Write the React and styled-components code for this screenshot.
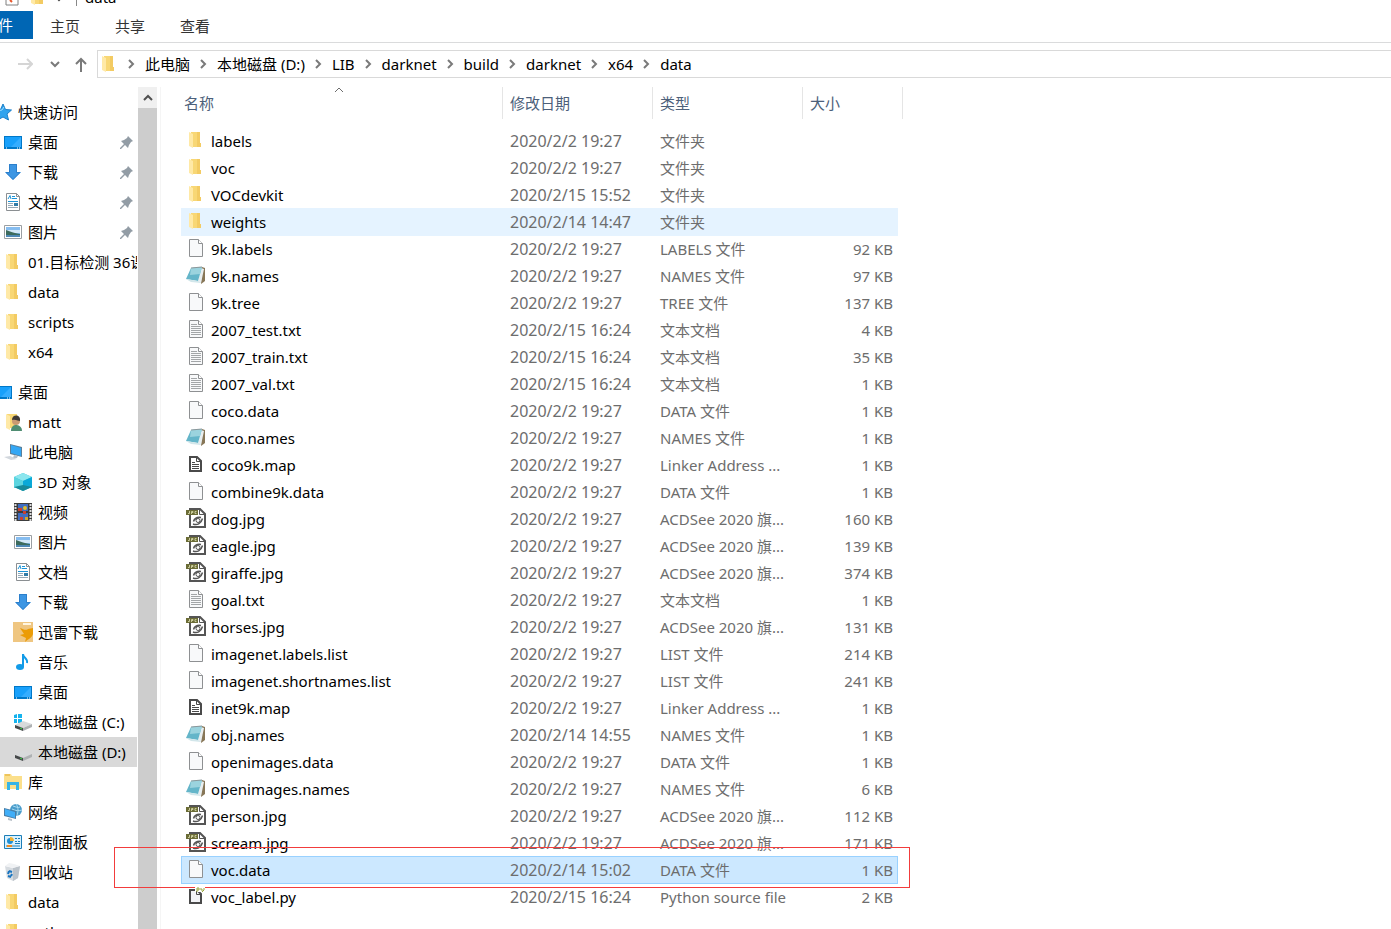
import React from 'react';
import styled, { createGlobalStyle } from 'styled-components';

const GlobalStyle = createGlobalStyle`
  * {
    box-sizing: border-box;
  }
  body {
    margin: 0;
    background: #fff;
    color: #000;
    font-family: 'Noto Sans', 'Noto Sans CJK SC', sans-serif;
    font-size: 15px;
  }
  button {
    margin: 0;
    padding: 0;
    border: none;
    background: none;
    color: inherit;
    font: inherit;
  }
`;

const Window = styled.div`
  display: flex;
  flex-direction: column;
  height: 100vh;
  overflow: hidden;
`;

const TitleBar = styled.header`
  display: flex;
  align-items: flex-end;
  height: 11px;
  padding: 0 0 5px 5px;
  overflow: hidden;
`;

const TitleIcons = styled.div`
  display: flex;
  align-items: flex-end;
  gap: 10px;
  width: 71px;
`;

const Title = styled.span`
  height: 16px;
  padding-left: 8px;
  border-left: 1px solid #888;
  line-height: 14px;
`;

const Ribbon = styled.nav`
  display: flex;
  height: 32px;
  border-bottom: 1px solid #dadbdc;
`;

const FileTab = styled.button`
  display: flex;
  justify-content: flex-end;
  width: 33px;
  height: 28px;
  padding-right: 20px;
  overflow: hidden;
  background: #0066b4;
  color: #fff;
  line-height: 28px;
  white-space: nowrap;
`;

const Tab = styled.button`
  width: 64px;
  height: 30px;
  margin-right: 1px;
  color: #333;
  line-height: 30px;
`;

const AddressRow = styled.div`
  display: flex;
  align-items: center;
  height: 42px;
  padding-left: 17px;
`;

const NavButton = styled.button`
  display: flex;
  justify-content: center;
  width: ${(props) => props.$width}px;
  margin-right: ${(props) => props.$gap}px;
`;

const AddressBox = styled.div`
  display: flex;
  flex: 1;
  align-items: center;
  height: 28px;
  padding-left: 2px;
  border: 1px solid #d9d9d9;
  border-right: none;
`;

const Crumb = styled.button`
  display: flex;
  align-items: center;
  line-height: 26px;
  white-space: nowrap;

  svg {
    margin: 0 10px 0 9px;
  }
`;

const Main = styled.main`
  display: flex;
  flex: 1;
  min-height: 0;
  padding-top: 2px;
`;

const Sidebar = styled.nav`
  width: 137px;
  overflow: hidden;
`;

const Tree = styled.ul`
  margin: 10px 0 0 -6px;
  padding: 0;
  list-style: none;
`;

const TreeItem = styled.li`
  margin-top: ${(props) => (props.$spaced ? '10px' : '0')};
`;

const TreeLink = styled.a`
  display: flex;
  align-items: center;
  gap: 6px;
  height: 30px;
  padding-left: ${(props) => props.$level * 10}px;
  padding-right: 4px;
  background: ${(props) => (props.$active ? '#d9d9d9' : 'transparent')};
  color: #000;
  line-height: 30px;
  text-decoration: none;
  white-space: nowrap;

  > svg {
    flex: none;
    margin-left: auto;
  }
`;

const IconSlot = styled.span`
  display: flex;
  flex: none;
  align-items: center;
  justify-content: center;
  width: ${(props) => props.$width}px;

  svg {
    flex: none;
  }
`;

const ScrollBar = styled.div`
  display: flex;
  flex-direction: column;
  width: 20px;
  margin-left: 1px;
  background: #f0f0f0;
  border-right: 1px solid #fff;
`;

const ScrollUp = styled.button`
  display: flex;
  align-items: center;
  justify-content: center;
  height: 21px;
`;

const Thumb = styled.div`
  flex: 1;
  background: #cdcdcd;
`;

const Content = styled.section`
  flex: 1;
  margin-left: 2px;
  padding-left: 20px;
  border-left: 1px solid #f5f5f5;
`;

const FileTable = styled.table`
  display: block;

  thead,
  tbody {
    display: block;
  }
  tbody {
    padding-top: 8px;
  }
`;

const HeadRow = styled.tr`
  display: grid;
  grid-template-columns: 322px 150px 150px 100px;
`;

const HeadCell = styled.th`
  position: relative;
  height: 32px;
  padding: 0 0 0 ${(props) => (props.$first ? 3 : 7)}px;
  border-right: 1px solid #e5e5e5;
  color: #4c607a;
  font-weight: normal;
  line-height: 32px;
  text-align: left;

  svg {
    position: absolute;
    top: 0;
    left: 0;
    right: 6px;
    margin: 0 auto;
  }
`;

const Row = styled.tr`
  position: relative;
  display: grid;
  grid-template-columns: 321px 150px 150px 94px;
  width: 717px;
  height: 28px;
  margin-bottom: -1px;
  border: 1px solid ${(props) => (props.$selected ? '#99d1ff' : 'transparent')};
  background: ${(props) => {
    if (props.$selected) return '#cce8ff';
    return props.$hovered ? '#e5f3ff' : 'transparent';
  }};
`;

const Cell = styled.td`
  padding: 0 ${(props) => (props.$right ? 4 : 0)}px 0 7px;
  color: #6d6d6d;
  line-height: 26px;
  text-align: ${(props) => (props.$right ? 'right' : 'left')};
  white-space: nowrap;
`;

const DateCell = styled(Cell)`
  font-size: 16px;
`;

const NameCell = styled.td`
  display: flex;
  gap: 5px;
  padding: 0 0 0 4px;
  line-height: 26px;
  white-space: nowrap;

  ${IconSlot} {
    padding-bottom: 2px;
  }
`;

const Marker = styled.td`
  position: absolute;
  top: -10px;
  left: -68px;
  width: 796px;
  height: 41px;
  padding: 0;
  border: 1px solid #f23c3c;
  pointer-events: none;
`;

/* ---------- icons ---------- */

const Svg = ({ size = 18, children }) => (
  <svg width={size} height={size} viewBox={`0 0 ${size} ${size}`} fill="none" aria-hidden="true">
    {children}
  </svg>
);

const FolderIcon = () => (
  <Svg>
    <path d="M4 1h9v11h1v4H4z" fill="#f8d775" />
    <path d="M10 1h3v11h1v4h-4z" fill="#f3cb63" />
    <path d="M2 1l4 2v14l-4-2z" fill="#ffe9a6" />
  </Svg>
);

const StarIcon = () => (
  <Svg>
    <path d="M9 1l2.500 5.500 6 .5-4.500 4 1.500 6L9 14l-5.500 3L5 11 .5 7l6-.5z" fill="#2fa3ee" stroke="#1b7fc9" />
    <path d="M3 8l5-1 2-3" stroke="#9fdcff" />
  </Svg>
);

const DesktopIcon = () => (
  <Svg>
    <path d="M0 3h18v13H0z" fill="#0078c8" />
    <path d="M1 4h16v10H1z" fill="#18a0fb" />
    <path d="M17 4v10H7z" fill="#35adff" />
    <path d="M2 15h1M13 15h1M15 15h1" stroke="#fff" />
  </Svg>
);

const DownloadIcon = () => (
  <Svg>
    <path d="M5 1h8v8h4l-8 8-8-8h4z" fill="#3d96e3" />
    <path d="M5.500 1.500h7v8h3.500l-7 7-7-7h3.500z" stroke="#2c7fcb" />
  </Svg>
);

const DocumentIcon = () => (
  <Svg>
    <path d="M2.500 .5h10l3 3v14h-13z" fill="#fff" stroke="#8b8f92" />
    <path d="M12.500 .5v3h3" stroke="#8b8f92" />
    <path d="M4 6l2-3.500L7 6M8 3.500h3M8 5.500h5" stroke="#1b93d6" />
    <path d="M4 8.500h10" stroke="#1b93d6" />
    <path d="M4 10.500h5M4 12.500h5M4 14.500h10" stroke="#93a9b8" />
    <path d="M10 10h4v3h-4z" fill="#2f7ca8" />
  </Svg>
);

const PictureIcon = () => (
  <Svg>
    <path d="M.5 2.500h17v13H.5z" fill="#fff" stroke="#9a9fa3" />
    <path d="M2 4h14v10H2z" fill="#86bdf0" />
    <path d="M2 7h14v3H2z" fill="#d3e8f8" />
    <path d="M2 7c4 1 6 3 14 4v1H2z" fill="#3d6b5d" />
    <path d="M2 12h14v2H2z" fill="#4e88b5" />
  </Svg>
);

const UserFolderIcon = () => (
  <Svg>
    <path d="M3 1h10v14H3z" fill="#f8d775" />
    <path d="M2 1l4 2v14l-4-2z" fill="#ffe9a6" />
    <path d="M7 18c0-5 3-6 5-6s6 1 6 6z" fill="#4f8d72" />
    <circle cx="12" cy="8" r="4" fill="#c99a72" />
    <path d="M8 7c0-6 9-6 8 1-2 0-4-2-8-1z" fill="#3f3a36" />
  </Svg>
);

const ComputerIcon = () => (
  <Svg>
    <path d="M6 1l12 3v10L6 11z" fill="#5b7f99" />
    <path d="M7 2l10 3v8L7 10z" fill="#33a7f5" />
    <path d="M10 12l4 1-1 2h-4z" fill="#b8c1c9" />
    <path d="M0 14l6-1 7 3-6 1z" fill="#d2d7dd" />
  </Svg>
);

const CubeIcon = () => (
  <Svg>
    <path d="M9 0l9 4v10l-9 4-9-4V4z" fill="#35c4d6" />
    <path d="M9 0l9 4-9 4-9-4z" fill="#8ce6ee" />
    <path d="M0 4l9 4v5l-9 2z" fill="#5cd5e0" />
    <path d="M18 4L9 8v5l9 2z" fill="#0aa9d8" />
    <path d="M0 14l9-2 9 2-9 4z" fill="#178a9a" />
  </Svg>
);

const VideoIcon = () => (
  <Svg>
    <path d="M0 0h18v18H0z" fill="#3c3c3c" />
    <path d="M1.500 1v17M16.500 1v17" stroke="#ddd" strokeWidth="2" strokeDasharray="2 1" />
    <path d="M4 1h10v7H4zM4 10h10v7H4z" fill="#3f6cc0" />
    <circle cx="11" cy="5" r="2" fill="#e0bf2d" />
    <path d="M4 5h4v3H4zM9 8h3v3H9zM6 14h3v3H6z" fill="#c9402f" />
    <path d="M11 14h3v3h-3z" fill="#d2a52a" />
  </Svg>
);

const ThunderIcon = () => (
  <Svg size={20}>
    <path d="M0 0h20v20H0z" fill="#efc681" />
    <path d="M10 1h8v2h-8z" fill="#fff6e2" />
    <path d="M7 6c3 1 6 3 8 1l5-1v6c-1 4-5 5-8 8l1-4-6-3 4-1z" fill="#eb9c06" />
  </Svg>
);

const MusicIcon = () => (
  <Svg>
    <path d="M9 1c0 4 5 4 4 9" stroke="#129be8" strokeWidth="2" />
    <path d="M9 1v13" stroke="#129be8" strokeWidth="2" />
    <ellipse cx="6" cy="14" rx="4" ry="3" fill="#129be8" />
  </Svg>
);

const DriveIcon = ({ system }) => (
  <Svg>
    {system && <path d="M0 2l3-1v4H0zM4 1h4v4H4zM0 6h3v4H0zM4 6h4v4H4z" fill="#15b3ee" />}
    <path d="M1 12l8-4 9 3-9 4z" fill="#d8dadb" />
    <path d="M9 15l9-4v3l-9 4z" fill="#aeb1b3" />
    <path d="M1 12l8 3v3l-8-3z" fill="#454849" />
    <path d="M6 15l2 1" stroke="#3ddc4a" />
  </Svg>
);

const LibraryIcon = () => (
  <Svg>
    <path d="M0 1h7l1 2h10v13H0z" fill="#fbdf8b" />
    <path d="M1 2h5" stroke="#e0a92d" />
    <path d="M3 17V9h12v8h-3v-5H6v5z" fill="#35b4e6" />
  </Svg>
);

const NetworkIcon = () => (
  <Svg>
    <circle cx="12" cy="7" r="6" fill="#4a9ccb" />
    <path d="M9 3c3 1 5 2 7 1M8 6c4 2 7 2 10 1M12 1c3 4 2 8 1 12" stroke="#a9dcf2" />
    <path d="M0 5l12 3v8L0 13z" fill="#4b7ea6" />
    <path d="M1 6l10 3v6L1 12z" fill="#40aef8" />
    <path d="M4 15l4 1v2l-4-1z" fill="#b8c1c9" />
  </Svg>
);

const ControlPanelIcon = () => (
  <Svg>
    <path d="M.5 2.500h17v13H.5z" fill="#d9f1fd" stroke="#1c7eb8" />
    <path d="M2 13h14" stroke="#1c7eb8" />
    <circle cx="6" cy="8" r="3" fill="#1f8fd4" />
    <path d="M6 4v4h4a4 4 0 0 0-4-4z" fill="#f3b233" />
    <path d="M11 5.500h2M14 5.500h2M11 8.500h2M14 8.500h2M11 10.500h5" stroke="#1c7eb8" />
    <path d="M3 13h5" stroke="#ef8a1c" strokeWidth="2" />
  </Svg>
);

const RecycleIcon = () => (
  <Svg>
    <path d="M1 3l8 2 7-2-2 12-5 3-6-3z" fill="#d6dbe0" />
    <path d="M9 5l7-2-2 12-5 3z" fill="#bcc3ca" />
    <path d="M1 3l4-3 5 1 6 2-7 2z" fill="#f0f2f4" />
    <path d="M5 8l-1 3M5 8l3 1M8 11l-1 2M4 13l3 1" stroke="#1874bf" strokeWidth="2" />
  </Svg>
);

const PinIcon = () => (
  <Svg size={13}>
    <path d="M8 0l5 5-2 1-2 3-1 3-3-3-4 4H0v-1l4-4-3-3 3-1 3-2z" fill="#929ca5" />
  </Svg>
);

const PaperShape = () => (
  <>
    <path d="M2.500 .5h9l4 4v13h-13z" fill="#f8f9fa" stroke="#8e9092" />
    <path d="M11.500 .5v4h4" fill="#fff" stroke="#8e9092" />
  </>
);

const FileIcon = () => (
  <Svg>
    <PaperShape />
  </Svg>
);

const TextIcon = () => (
  <Svg>
    <PaperShape />
    <path d="M4 4.500h6M4 6.500h10M4 8.500h10M4 10.500h10M4 12.500h10M4 14.500h10" stroke="#a3a6a8" />
  </Svg>
);

const NotebookIcon = () => (
  <svg width="20" height="18" viewBox="0 0 20 18" aria-hidden="true">
    <path d="M16 1l3 1v13l-4 3z" fill="#877657" />
    <path d="M15 2l3 1-3 14-3-1z" fill="#e8eef0" />
    <path d="M5 2l11-1-4 14-12-2z" fill="#64b5c9" />
    <path d="M5 2l11-1-2 7-10 1z" fill="#9bd3de" />
    <path d="M0 13l12 2 3 2-10-1z" fill="#d2e6ea" />
    <path d="M5 2l11-1" stroke="#8b979a" />
  </svg>
);

const MapIcon = () => (
  <Svg>
    <path d="M3 2h7l4 4v10H3z" fill="#fff" stroke="#4a4a4a" strokeWidth="2" />
    <path d="M9.500 2v4.500H14" stroke="#4a4a4a" />
    <path d="M5 7.500h3M5 9.500h7M5 11.500h7M5 13.500h7" stroke="#4a4a4a" />
  </Svg>
);

const JpgIcon = () => (
  <svg width="20" height="20" viewBox="0 0 20 20" fill="none" aria-hidden="true">
    <path d="M4 1h10l5 5v13H4z" fill="#fff" stroke="#555" strokeWidth="2" />
    <path d="M13.500 1v5.500H19" stroke="#555" />
    <path d="M0 2h12v5H0z" fill="#6b6c36" />
    <path d="M2 5.500h1.500V3M5.500 6V3.500h1.500v1H5.500M10.500 3.500H9v2h1.500" stroke="#c9ca9b" />
    <path d="M7 16c4 1.500 8 0 9.500-5.500" stroke="#555" strokeWidth="1.500" />
    <path d="M7.500 13.500c1-3 4-4.500 7.500-4" stroke="#555" strokeWidth="1.500" />
    <circle cx="12" cy="12.500" r="2" stroke="#555" />
  </svg>
);

const PythonIcon = () => (
  <Svg>
    <path d="M3 3h7l4 4v9H3z" fill="#f3f4f7" stroke="#4a4a4a" strokeWidth="2" />
    <path d="M8 0h10v5H8z" fill="#fff" />
    <path d="M9.500 4v3.500H14" stroke="#4a4a4a" />
    <path d="M10 5V1h2v2h-2M14 1v2h2M17 1v2l-2 2" stroke="#9aa63c" />
  </Svg>
);

const Chevron = ({ dir = 'right', color = '#7a7a7a' }) => {
  const paths = {
    right: 'M2 1l4 4-4 4',
    down: 'M1 3l4 4 4-4',
    up: 'M1 7l4-4 4 4',
  };
  const width = dir === 'right' ? 8 : 10;
  return (
    <svg width={width} height="10" viewBox={`0 0 ${width} 10`} fill="none" aria-hidden="true">
      <path d={paths[dir]} stroke={color} strokeWidth="2" />
    </svg>
  );
};

/* ---------- data ---------- */

const crumbs = ['此电脑', '本地磁盘 (D:)', 'LIB', 'darknet', 'build', 'darknet', 'x64', 'data'];

const treeItems = [
  { label: '快速访问', icon: StarIcon, level: 0 },
  { label: '桌面', icon: DesktopIcon, level: 1, pinned: true },
  { label: '下载', icon: DownloadIcon, level: 1, pinned: true },
  { label: '文档', icon: DocumentIcon, level: 1, pinned: true },
  { label: '图片', icon: PictureIcon, level: 1, pinned: true },
  { label: '01.目标检测 36课', icon: FolderIcon, level: 1 },
  { label: 'data', icon: FolderIcon, level: 1 },
  { label: 'scripts', icon: FolderIcon, level: 1 },
  { label: 'x64', icon: FolderIcon, level: 1 },
  { label: '桌面', icon: DesktopIcon, level: 0, spaced: true },
  { label: 'matt', icon: UserFolderIcon, level: 1 },
  { label: '此电脑', icon: ComputerIcon, level: 1 },
  { label: '3D 对象', icon: CubeIcon, level: 2 },
  { label: '视频', icon: VideoIcon, level: 2 },
  { label: '图片', icon: PictureIcon, level: 2 },
  { label: '文档', icon: DocumentIcon, level: 2 },
  { label: '下载', icon: DownloadIcon, level: 2 },
  { label: '迅雷下载', icon: ThunderIcon, level: 2 },
  { label: '音乐', icon: MusicIcon, level: 2 },
  { label: '桌面', icon: DesktopIcon, level: 2 },
  { label: '本地磁盘 (C:)', icon: DriveIcon, level: 2, system: true },
  { label: '本地磁盘 (D:)', icon: DriveIcon, level: 2, active: true },
  { label: '库', icon: LibraryIcon, level: 1 },
  { label: '网络', icon: NetworkIcon, level: 1 },
  { label: '控制面板', icon: ControlPanelIcon, level: 1 },
  { label: '回收站', icon: RecycleIcon, level: 1 },
  { label: 'data', icon: FolderIcon, level: 1 },
  { label: 'python', icon: FolderIcon, level: 1 },
];

const kinds = {
  folder: { icon: FolderIcon, type: '文件夹' },
  labels: { icon: FileIcon, type: 'LABELS 文件' },
  names: { icon: NotebookIcon, type: 'NAMES 文件' },
  tree: { icon: FileIcon, type: 'TREE 文件' },
  txt: { icon: TextIcon, type: '文本文档' },
  data: { icon: FileIcon, type: 'DATA 文件' },
  map: { icon: MapIcon, type: 'Linker Address ...' },
  jpg: { icon: JpgIcon, type: 'ACDSee 2020 旗...' },
  list: { icon: FileIcon, type: 'LIST 文件' },
  py: { icon: PythonIcon, type: 'Python source file' },
};

const files = [
  ['labels', 'folder', '2020/2/2 19:27', ''],
  ['voc', 'folder', '2020/2/2 19:27', ''],
  ['VOCdevkit', 'folder', '2020/2/15 15:52', ''],
  ['weights', 'folder', '2020/2/14 14:47', ''],
  ['9k.labels', 'labels', '2020/2/2 19:27', '92 KB'],
  ['9k.names', 'names', '2020/2/2 19:27', '97 KB'],
  ['9k.tree', 'tree', '2020/2/2 19:27', '137 KB'],
  ['2007_test.txt', 'txt', '2020/2/15 16:24', '4 KB'],
  ['2007_train.txt', 'txt', '2020/2/15 16:24', '35 KB'],
  ['2007_val.txt', 'txt', '2020/2/15 16:24', '1 KB'],
  ['coco.data', 'data', '2020/2/2 19:27', '1 KB'],
  ['coco.names', 'names', '2020/2/2 19:27', '1 KB'],
  ['coco9k.map', 'map', '2020/2/2 19:27', '1 KB'],
  ['combine9k.data', 'data', '2020/2/2 19:27', '1 KB'],
  ['dog.jpg', 'jpg', '2020/2/2 19:27', '160 KB'],
  ['eagle.jpg', 'jpg', '2020/2/2 19:27', '139 KB'],
  ['giraffe.jpg', 'jpg', '2020/2/2 19:27', '374 KB'],
  ['goal.txt', 'txt', '2020/2/2 19:27', '1 KB'],
  ['horses.jpg', 'jpg', '2020/2/2 19:27', '131 KB'],
  ['imagenet.labels.list', 'list', '2020/2/2 19:27', '214 KB'],
  ['imagenet.shortnames.list', 'list', '2020/2/2 19:27', '241 KB'],
  ['inet9k.map', 'map', '2020/2/2 19:27', '1 KB'],
  ['obj.names', 'names', '2020/2/14 14:55', '1 KB'],
  ['openimages.data', 'data', '2020/2/2 19:27', '1 KB'],
  ['openimages.names', 'names', '2020/2/2 19:27', '6 KB'],
  ['person.jpg', 'jpg', '2020/2/2 19:27', '112 KB'],
  ['scream.jpg', 'jpg', '2020/2/2 19:27', '171 KB'],
  ['voc.data', 'data', '2020/2/14 15:02', '1 KB'],
  ['voc_label.py', 'py', '2020/2/15 16:24', '2 KB'],
];

const App = () => (
  <Window>
    <GlobalStyle />
    <TitleBar>
      <TitleIcons>
        <svg width="14" height="16" viewBox="0 0 14 16" fill="none" aria-hidden="true">
          <path d="M1 0h12v15H1z" fill="#fff" stroke="#808080" />
          <path d="M5 10l2 2" stroke="#e8562a" strokeWidth="2" />
        </svg>
        <FolderIcon />
        <svg width="10" height="10" viewBox="0 0 10 10" fill="none" aria-hidden="true">
          <path d="M0 2l2 2 2-2" stroke="#444" strokeWidth="2" />
        </svg>
      </TitleIcons>
      <Title>data</Title>
    </TitleBar>
    <Ribbon>
      <FileTab type="button">文件</FileTab>
      <Tab type="button">主页</Tab>
      <Tab type="button">共享</Tab>
      <Tab type="button">查看</Tab>
    </Ribbon>
    <AddressRow>
      <NavButton type="button" aria-label="前进" $width={16} $gap={17}>
        <svg width="16" height="12" viewBox="0 0 16 12" fill="none" aria-hidden="true">
          <path d="M1 6h14M10 1l5 5-5 5" stroke="#d5d5d5" strokeWidth="2" />
        </svg>
      </NavButton>
      <NavButton type="button" aria-label="最近浏览的位置" $width={10} $gap={14}>
        <Chevron dir="down" />
      </NavButton>
      <NavButton type="button" aria-label="向上" $width={14} $gap={9}>
        <svg width="14" height="16" viewBox="0 0 14 16" fill="none" aria-hidden="true">
          <path d="M7 16V3M2 8l5-5 5 5" stroke="#7a7a7a" strokeWidth="2" />
        </svg>
      </NavButton>
      <AddressBox>
        <FolderIcon />
        {crumbs.map((crumb, index) => (
          <Crumb type="button" key={index}>
            <Chevron />
            {crumb}
          </Crumb>
        ))}
      </AddressBox>
    </AddressRow>
    <Main>
      <Sidebar>
        <Tree>
          {treeItems.map(({ label, icon: Icon, level, pinned, spaced, active, system }, index) => (
            <TreeItem key={index} $spaced={spaced}>
              <TreeLink href="#" $level={level} $active={active}>
                <IconSlot $width={18}>
                  <Icon system={system} />
                </IconSlot>
                <span>{label}</span>
                {pinned && <PinIcon />}
              </TreeLink>
            </TreeItem>
          ))}
        </Tree>
      </Sidebar>
      <ScrollBar>
        <ScrollUp type="button" aria-label="向上滚动">
          <Chevron dir="up" color="#505050" />
        </ScrollUp>
        <Thumb />
      </ScrollBar>
      <Content>
        <FileTable>
          <thead>
            <HeadRow>
              <HeadCell $first>
                名称
                <svg width="10" height="6" viewBox="0 0 10 6" fill="none" aria-hidden="true">
                  <path d="M1 5l4-4 4 4" stroke="#6d6d6d" />
                </svg>
              </HeadCell>
              <HeadCell>修改日期</HeadCell>
              <HeadCell>类型</HeadCell>
              <HeadCell>大小</HeadCell>
            </HeadRow>
          </thead>
          <tbody>
            {files.map(([name, kind, date, size]) => {
              const { icon: Icon, type } = kinds[kind];
              const selected = name === 'voc.data';
              return (
                <Row key={name} $selected={selected} $hovered={name === 'weights'}>
                  <NameCell>
                    <IconSlot $width={20}>
                      <Icon />
                    </IconSlot>
                    {name}
                  </NameCell>
                  <DateCell>{date}</DateCell>
                  <Cell>{type}</Cell>
                  <Cell $right>{size}</Cell>
                  {selected && <Marker />}
                </Row>
              );
            })}
          </tbody>
        </FileTable>
      </Content>
    </Main>
  </Window>
);

export default App;
